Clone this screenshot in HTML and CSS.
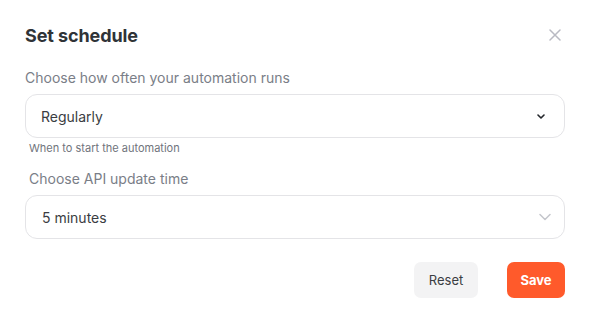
FILE: index.html
```html
<!DOCTYPE html>
<html lang="en">
  <head>
    <meta charset="UTF-8" />
    <meta name="viewport" content="width=device-width, initial-scale=1.0" />
    <title>Set schedule</title>
    <link rel="stylesheet" href="styles.css">
  </head>
  <body>
    <div class="modal">
      <div class="modal-head">
        <h2 class="modal-title">Set schedule</h2>
        <button class="close-btn" type="button" aria-label="Close">
          <svg width="12" height="12" viewBox="0 0 12 12">
            <path d="M1 1 L11 11 M11 1 L1 11" stroke="#b9bac3" stroke-width="1.5" stroke-linecap="round" fill="none"/>
          </svg>
        </button>
      </div>

      <div class="field">
        <label class="field-label">Choose how often your automation runs</label>
        <div class="select">
          <span>Regularly</span>
          <svg class="chev-dark" width="8" height="5" viewBox="0 0 8 5">
            <path d="M1 1 L4 4 L7 1" stroke="#23262b" stroke-width="1.6" fill="none" stroke-linecap="round" stroke-linejoin="round"/>
          </svg>
        </div>
        <div class="hint">When to start the automation</div>
      </div>

      <div class="field field-2">
        <label class="field-label indent">Choose API update time</label>
        <div class="select">
          <span class="indent-1">5 minutes</span>
          <svg class="chev-light" width="12" height="8" viewBox="0 0 12 8">
            <path d="M1 1.5 L6 6.5 L11 1.5" stroke="#c4c6cc" stroke-width="1.5" fill="none" stroke-linecap="round" stroke-linejoin="round"/>
          </svg>
        </div>
      </div>

      <div class="actions">
        <button class="btn btn-reset" type="button">Reset</button>
        <button class="btn btn-save" type="button">Save</button>
      </div>
    </div>
  </body>
</html>
```

FILE: styles.css
```css
body {
  margin: 0;
  background-color: #ffffff;
  font-family: Inter, "Noto Sans", sans-serif;
}

.modal {
  width: 540px;
  padding: 22px 27px 20px 25px;
}

.modal-head {
  display: flex;
  justify-content: space-between;
  align-items: center;
  height: 26px;
}

.modal-title {
  margin: 0;
  font-size: 18px;
  font-weight: 700;
  color: #2f3337;
  letter-spacing: -0.1px;
}

.close-btn {
  border: none;
  background: none;
  padding: 0;
  margin-right: 4px;
  width: 12px;
  height: 12px;
  display: flex;
}

.field {
  margin-top: 20px;
}

.field-2 {
  margin-top: 14px;
}

.field-label {
  display: block;
  font-size: 14px;
  color: #7a7e87;
  line-height: 20px;
  margin-bottom: 6px;
}

.indent {
  padding-left: 4px;
}

.select {
  height: 42px;
  border: 1px solid #e4e4e7;
  border-radius: 12px;
  display: flex;
  align-items: center;
  justify-content: space-between;
  padding: 0 19px 0 15px;
  font-size: 14px;
  color: #3a3d42;
}

.indent-1 {
  padding-left: 1px;
}

.chev-light {
  margin-right: -6px;
}

.hint {
  font-size: 11px;
  color: #70747c;
  padding-left: 4px;
  margin-top: 3px;
  line-height: 14px;
}

.actions {
  display: flex;
  justify-content: flex-end;
  gap: 29px;
  margin-top: 23px;
}

.btn {
  height: 36px;
  border: none;
  border-radius: 7px;
  font-family: Inter, "Noto Sans", sans-serif;
  font-size: 13px;
  cursor: pointer;
}

.btn-reset {
  width: 64px;
  background-color: #f3f3f4;
  color: #3a3d42;
}

.btn-save {
  width: 58px;
  background-color: #ff5a2b;
  color: #ffffff;
  font-weight: 700;
}
```
